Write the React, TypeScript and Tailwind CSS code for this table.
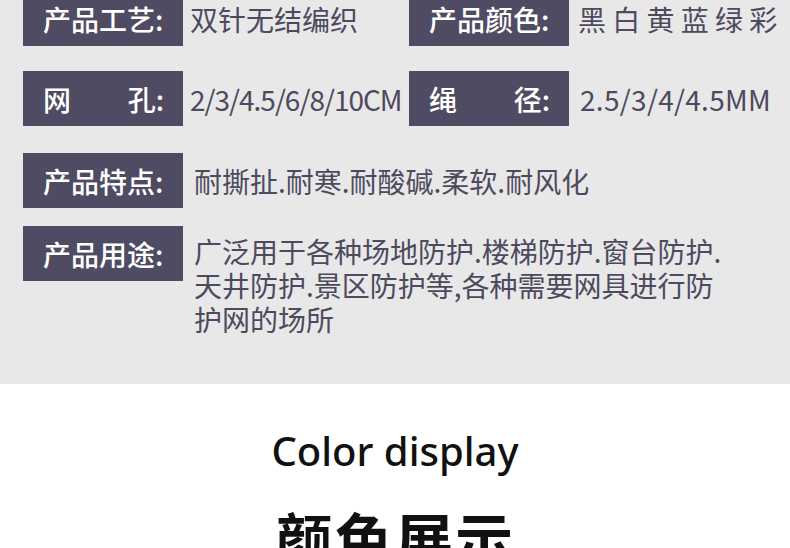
import React from "react";

const cjk = { fontFamily: '"Noto Sans CJK SC", "Noto Sans", sans-serif' };

function Label({ left, right }: { left: string; right?: string }) {
  return (
    <div className="w-[160px] h-[55px] shrink-0 bg-[#4f4b62] flex items-center pl-[20px] pr-[19px] text-white text-[28px] font-medium leading-none whitespace-nowrap">
      {right ? (
        <div className="flex w-full justify-between">
          <span>{left}</span>
          <span>{right}</span>
        </div>
      ) : (
        <span>{left}</span>
      )}
    </div>
  );
}

export default function App() {
  return (
    <div className="w-[790px] h-[548px] overflow-hidden bg-white" style={cjk}>
      <div className="bg-[#e8e8e8] h-[384px] pl-[23px] overflow-hidden">
        <div className="-mt-[9px] flex items-center">
          <Label left="产品工艺:" />
          <div className="w-[226px] pl-[7px] text-[28px] text-[#4d4a5e] leading-none whitespace-nowrap">双针无结编织</div>
          <Label left="产品颜色:" />
          <div className="pl-[9px] text-[28px] text-[#4d4a5e] leading-none whitespace-nowrap">黑 白 黄 蓝 绿 彩</div>
        </div>
        <div className="mt-[25px] flex items-center">
          <Label left="网" right="孔:" />
          <div className="w-[226px] pl-[7px] text-[28px] text-[#4d4a5e] leading-none tracking-[-1px] whitespace-nowrap">2/3/4.5/6/8/10CM</div>
          <Label left="绳" right="径:" />
          <div className="pl-[11px] text-[28px] text-[#4d4a5e] leading-none tracking-[0.3px] whitespace-nowrap">2.5/3/4/4.5MM</div>
        </div>
        <div className="mt-[27px] flex items-center">
          <Label left="产品特点:" />
          <div className="pl-[11px] text-[28px] text-[#4d4a5e] leading-none whitespace-nowrap">耐撕扯.耐寒.耐酸碱.柔软.耐风化</div>
        </div>
        <div className="mt-[18px] flex items-start">
          <Label left="产品用途:" />
          <div className="pl-[11px] pt-[8px] text-[28px] text-[#4d4a5e] leading-[34px] whitespace-nowrap">
            <div>广泛用于各种场地防护.楼梯防护.窗台防护.</div>
            <div>天井防护.景区防护等,各种需要网具进行防</div>
            <div>护网的场所</div>
          </div>
        </div>
      </div>
      <div className="flex flex-col items-center">
        <div className="mt-[47px] text-[40px] leading-none font-medium text-[#111]" style={{ fontFamily: '"Noto Sans", sans-serif' }}>
          Color display
        </div>
        <div className="mt-[37px] text-[58px] leading-none font-bold text-[#111] tracking-[2px]">颜色展示</div>
      </div>
    </div>
  );
}
